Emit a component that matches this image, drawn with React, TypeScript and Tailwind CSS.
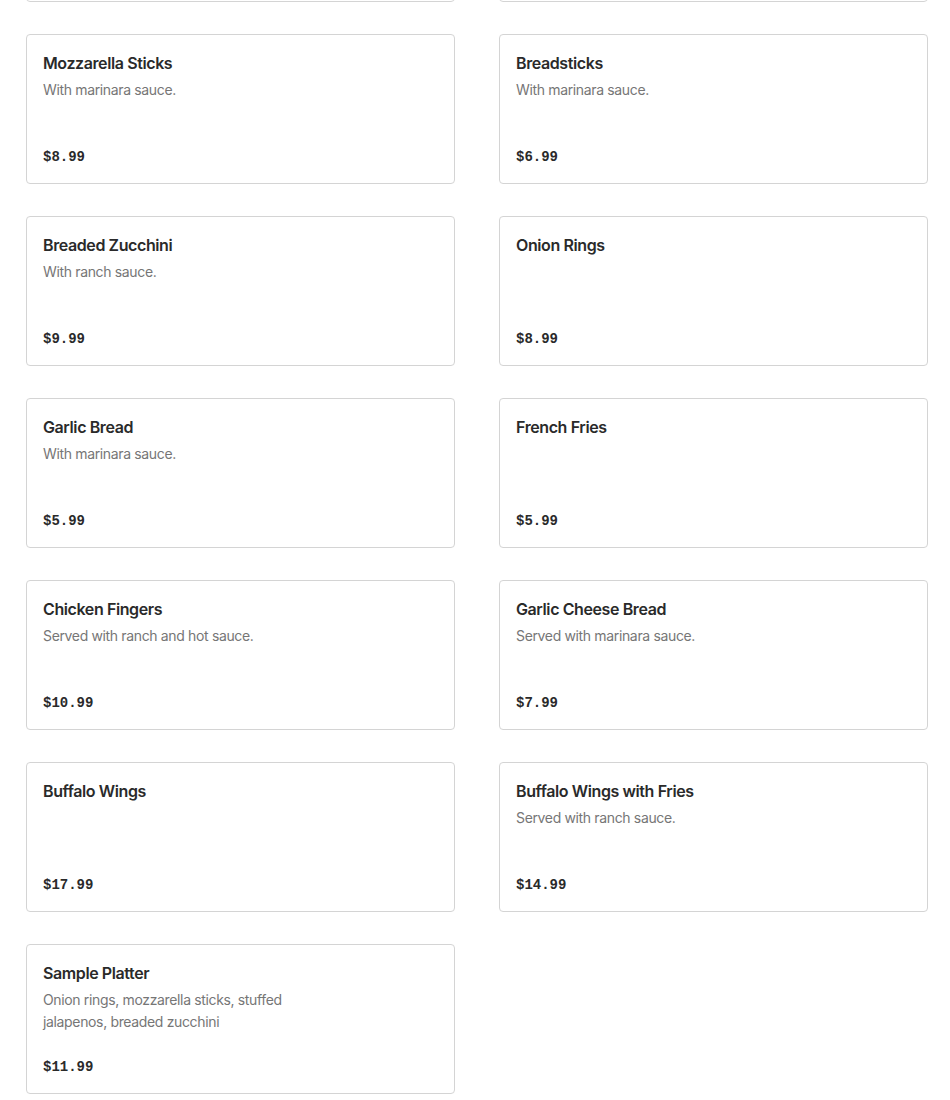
type Item = { name: string; desc?: string; price: string };

const items: Item[] = [
  { name: "Mozzarella Sticks", desc: "With marinara sauce.", price: "$8.99" },
  { name: "Breadsticks", desc: "With marinara sauce.", price: "$6.99" },
  { name: "Breaded Zucchini", desc: "With ranch sauce.", price: "$9.99" },
  { name: "Onion Rings", price: "$8.99" },
  { name: "Garlic Bread", desc: "With marinara sauce.", price: "$5.99" },
  { name: "French Fries", price: "$5.99" },
  { name: "Chicken Fingers", desc: "Served with ranch and hot sauce.", price: "$10.99" },
  { name: "Garlic Cheese Bread", desc: "Served with marinara sauce.", price: "$7.99" },
  { name: "Buffalo Wings", price: "$17.99" },
  { name: "Buffalo Wings with Fries", desc: "Served with ranch sauce.", price: "$14.99" },
  {
    name: "Sample Platter",
    desc: "Onion rings, mozzarella sticks, stuffed jalapenos, breaded zucchini",
    price: "$11.99",
  },
];

function MenuCard({ item }: { item: Item }) {
  return (
    <div className="flex h-[150px] flex-col rounded-[4px] border border-[#d4d4d4] bg-white px-4 pt-4 pb-4">
      <div className="text-[16px] leading-6 font-semibold tracking-[-0.4px] text-[#2a2a2a]">{item.name}</div>
      {item.desc && (
        <div className="mt-1 max-w-[250px] text-[14px] leading-[22px] tracking-[-0.35px] text-[#767676]">
          {item.desc}
        </div>
      )}
      <div className="mt-auto font-['Liberation_Mono',monospace] text-[14px] leading-5 font-bold text-[#2a2a2a]">
        {item.price}
      </div>
    </div>
  );
}

export default function App() {
  return (
    <div className="h-[1100px] overflow-hidden bg-white font-['Inter',sans-serif]">
      <div className="mt-[-148px] ml-[26px] grid w-[902px] grid-cols-2 gap-x-[44px] gap-y-8">
        {/* previous row, scrolled out of view */}
        <div className="h-[150px] rounded-[4px] border border-[#d4d4d4]" />
        <div className="h-[150px] rounded-[4px] border border-[#d4d4d4]" />
        {items.map((item) => (
          <MenuCard key={item.name} item={item} />
        ))}
      </div>
    </div>
  );
}
